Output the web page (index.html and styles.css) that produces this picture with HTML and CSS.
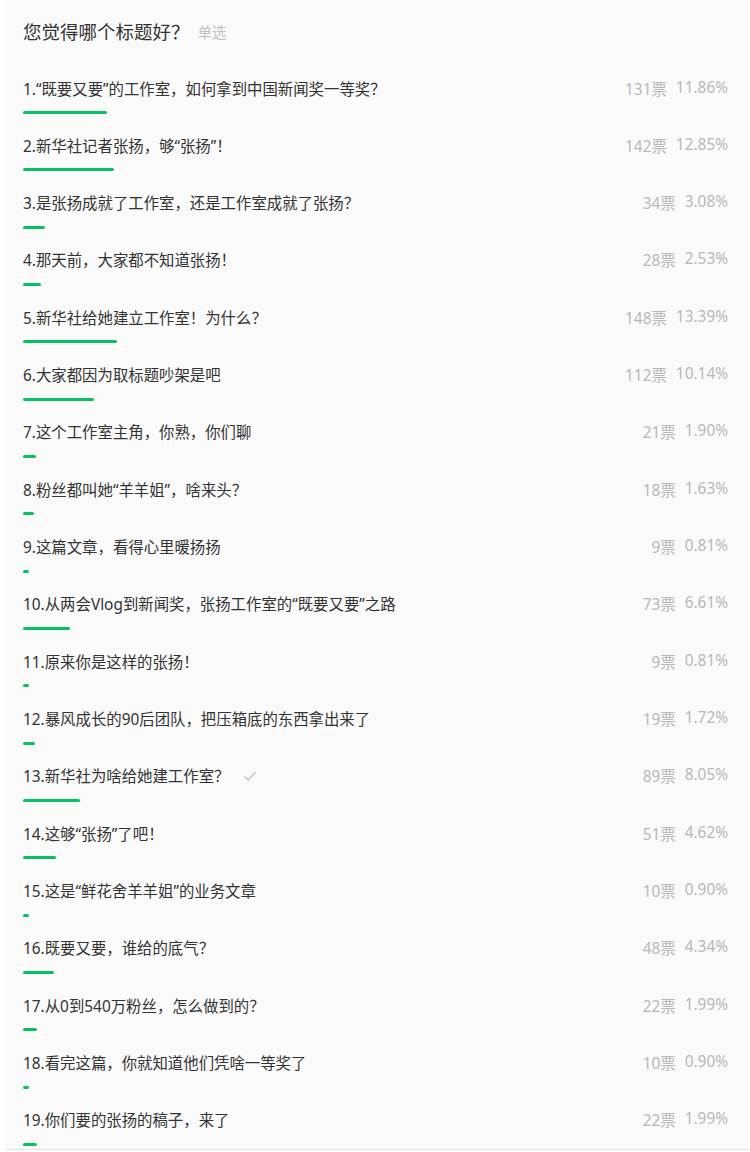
FILE: index.html
```html
<!DOCTYPE html>
<html lang="zh-CN">
<head>
    <meta charset="UTF-8">
    <meta name="viewport" content="width=device-width, initial-scale=1.0">
    <title>投票</title>
    <link rel="stylesheet" href="styles.css">
</head>
<body>
    <main class="poll">
        <h1 class="poll-title">您觉得哪个标题好？<span class="poll-type">单选</span></h1>
        <ul class="options">
            <li class="option">
                <div class="option-row"><span class="option-text">1.“既要又要”的工作室，如何拿到中国新闻奖一等奖？</span><span class="stats"><span>131票</span><span>11.86%</span></span></div>
                <div class="bar" style="width: 11.86%"></div>
            </li>
            <li class="option">
                <div class="option-row"><span class="option-text">2.新华社记者张扬，够“张扬”！</span><span class="stats"><span>142票</span><span>12.85%</span></span></div>
                <div class="bar" style="width: 12.85%"></div>
            </li>
            <li class="option">
                <div class="option-row"><span class="option-text">3.是张扬成就了工作室，还是工作室成就了张扬？</span><span class="stats"><span>34票</span><span>3.08%</span></span></div>
                <div class="bar" style="width: 3.08%"></div>
            </li>
            <li class="option">
                <div class="option-row"><span class="option-text">4.那天前，大家都不知道张扬！</span><span class="stats"><span>28票</span><span>2.53%</span></span></div>
                <div class="bar" style="width: 2.53%"></div>
            </li>
            <li class="option">
                <div class="option-row"><span class="option-text">5.新华社给她建立工作室！为什么？</span><span class="stats"><span>148票</span><span>13.39%</span></span></div>
                <div class="bar" style="width: 13.39%"></div>
            </li>
            <li class="option">
                <div class="option-row"><span class="option-text">6.大家都因为取标题吵架是吧</span><span class="stats"><span>112票</span><span>10.14%</span></span></div>
                <div class="bar" style="width: 10.14%"></div>
            </li>
            <li class="option">
                <div class="option-row"><span class="option-text">7.这个工作室主角，你熟，你们聊</span><span class="stats"><span>21票</span><span>1.90%</span></span></div>
                <div class="bar" style="width: 1.90%"></div>
            </li>
            <li class="option">
                <div class="option-row"><span class="option-text">8.粉丝都叫她“羊羊姐”，啥来头？</span><span class="stats"><span>18票</span><span>1.63%</span></span></div>
                <div class="bar" style="width: 1.63%"></div>
            </li>
            <li class="option">
                <div class="option-row"><span class="option-text">9.这篇文章，看得心里暖扬扬</span><span class="stats"><span>9票</span><span>0.81%</span></span></div>
                <div class="bar" style="width: 0.81%"></div>
            </li>
            <li class="option">
                <div class="option-row"><span class="option-text">10.从两会Vlog到新闻奖，张扬工作室的“既要又要”之路</span><span class="stats"><span>73票</span><span>6.61%</span></span></div>
                <div class="bar" style="width: 6.61%"></div>
            </li>
            <li class="option">
                <div class="option-row"><span class="option-text">11.原来你是这样的张扬！</span><span class="stats"><span>9票</span><span>0.81%</span></span></div>
                <div class="bar" style="width: 0.81%"></div>
            </li>
            <li class="option">
                <div class="option-row"><span class="option-text">12.暴风成长的90后团队，把压箱底的东西拿出来了</span><span class="stats"><span>19票</span><span>1.72%</span></span></div>
                <div class="bar" style="width: 1.72%"></div>
            </li>
            <li class="option">
                <div class="option-row"><span class="option-text">13.新华社为啥给她建工作室？<svg class="check" viewBox="0 0 16 16" width="16" height="16"><path d="M2.5 8.5 L6.2 12 L13.5 4.2" fill="none" stroke="#b8b8b8" stroke-width="1.2"/></svg></span><span class="stats"><span>89票</span><span>8.05%</span></span></div>
                <div class="bar" style="width: 8.05%"></div>
            </li>
            <li class="option">
                <div class="option-row"><span class="option-text">14.这够“张扬”了吧！</span><span class="stats"><span>51票</span><span>4.62%</span></span></div>
                <div class="bar" style="width: 4.62%"></div>
            </li>
            <li class="option">
                <div class="option-row"><span class="option-text">15.这是“鲜花舍羊羊姐”的业务文章</span><span class="stats"><span>10票</span><span>0.90%</span></span></div>
                <div class="bar" style="width: 0.90%"></div>
            </li>
            <li class="option">
                <div class="option-row"><span class="option-text">16.既要又要，谁给的底气？</span><span class="stats"><span>48票</span><span>4.34%</span></span></div>
                <div class="bar" style="width: 4.34%"></div>
            </li>
            <li class="option">
                <div class="option-row"><span class="option-text">17.从0到540万粉丝，怎么做到的？</span><span class="stats"><span>22票</span><span>1.99%</span></span></div>
                <div class="bar" style="width: 1.99%"></div>
            </li>
            <li class="option">
                <div class="option-row"><span class="option-text">18.看完这篇，你就知道他们凭啥一等奖了</span><span class="stats"><span>10票</span><span>0.90%</span></span></div>
                <div class="bar" style="width: 0.90%"></div>
            </li>
            <li class="option">
                <div class="option-row"><span class="option-text">19.你们要的张扬的稿子，来了</span><span class="stats"><span>22票</span><span>1.99%</span></span></div>
                <div class="bar" style="width: 1.99%"></div>
            </li>
        </ul>
    </main>
</body>
</html>
```

FILE: styles.css
```css
* {
    padding: 0;
    margin: 0;
    box-sizing: border-box;
}
body {
    background: #fff;
    font-family: "Noto Sans", "Noto Sans CJK SC", sans-serif;
    color: #333;
    height: 1152px;
    overflow: hidden;
}
.poll {
    margin-left: 5px;
    background: #fafafa;
    padding: 18px 22px 0 18px;
    border-bottom: 1px solid #e3e3e3;
    height: 1150px;
    overflow: hidden;
}
.poll-title {
    font-size: 18.5px;
    font-weight: normal;
    line-height: 28px;
    display: flex;
    align-items: center;
}
.poll-type {
    font-size: 14.5px;
    color: #c0c0c0;
    margin-left: 8px;
}
.options {
    list-style: none;
    margin-top: 20px;
}
.option {
    padding: 10px 0 9.33px;
}
.option-row {
    display: flex;
    justify-content: space-between;
    align-items: center;
    height: 24px;
    font-size: 15.4px;
}
.option-text {
    display: flex;
    align-items: center;
    white-space: nowrap;
}
.check {
    margin-left: 13px;
}
.stats {
    display: flex;
    gap: 9px;
    color: #b8b8b8;
}
.bar {
    height: 3px;
    margin-top: 11px;
    background: #07c160;
    border-radius: 2px;
    min-width: 5px;
}
```
